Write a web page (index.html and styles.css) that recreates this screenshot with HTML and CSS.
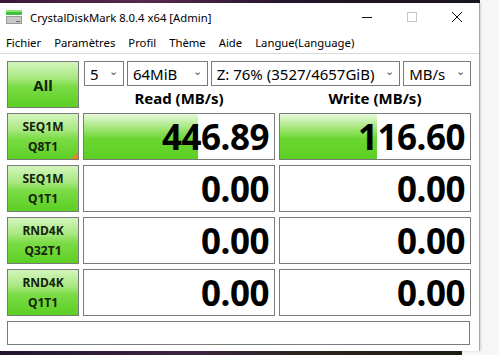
FILE: index.html
```html
<!DOCTYPE html>
<html lang="fr">
<head>
    <meta charset="UTF-8">
    <meta name="viewport" content="width=device-width, initial-scale=1.0">
    <title>CrystalDiskMark</title>
    <link rel="stylesheet" href="styles.css">
</head>
<body>

<div class="wall-top"></div>

<div class="window">
    <div class="titlebar">
        <svg class="app-icon" width="18" height="16" viewBox="0 0 18 16">
            <rect x="1" y="1" width="16" height="5" fill="#3fc23a"/>
            <rect x="1" y="1" width="16" height="2" fill="#8fe27a"/>
            <rect x="1" y="7" width="16" height="8" fill="#9a9a9a"/>
            <rect x="2" y="8" width="14" height="6" fill="#c9c9c9"/>
            <rect x="11" y="12" width="4" height="1" fill="#666"/>
        </svg>
        <span class="title">CrystalDiskMark 8.0.4 x64 [Admin]</span>
        <div class="controls">
            <svg width="12" height="12" viewBox="0 0 12 12"><path d="M1 6.5h10" stroke="#111" stroke-width="1"/></svg>
            <svg width="12" height="12" viewBox="0 0 12 12"><rect x="1.5" y="1.5" width="9" height="9" fill="none" stroke="#c4c4c4"/></svg>
            <svg width="12" height="12" viewBox="0 0 12 12"><path d="M1 1l10 10M11 1L1 11" stroke="#111" stroke-width="1"/></svg>
        </div>
    </div>

    <div class="menubar">
        <span>Fichier</span>
        <span>Paramètres</span>
        <span>Profil</span>
        <span>Thème</span>
        <span>Aide</span>
        <span>Langue(Language)</span>
    </div>

    <div class="main">
        <div class="grid">
            <div class="btn btn-all">All</div>
            <div class="top-right">
                <div class="combos">
                    <div class="combo c-count"><span>5</span><i>⌄</i></div>
                    <div class="combo c-size"><span>64MiB</span><i>⌄</i></div>
                    <div class="combo c-drive"><span>Z: 76% (3527/4657GiB)</span><i>⌄</i></div>
                    <div class="combo c-unit"><span>MB/s</span><i>⌄</i></div>
                </div>
                <div class="heads">
                    <div>Read (MB/s)</div>
                    <div>Write (MB/s)</div>
                </div>
            </div>

            <div class="btn active">SEQ1M<br>Q8T1</div>
            <div class="val"><div class="bar" style="width: 60%"></div><span>446.89</span></div>
            <div class="val"><div class="bar" style="width: 51%"></div><span>116.60</span></div>

            <div class="btn">SEQ1M<br>Q1T1</div>
            <div class="val"><span>0.00</span></div>
            <div class="val"><span>0.00</span></div>

            <div class="btn">RND4K<br>Q32T1</div>
            <div class="val"><span>0.00</span></div>
            <div class="val"><span>0.00</span></div>

            <div class="btn">RND4K<br>Q1T1</div>
            <div class="val"><span>0.00</span></div>
            <div class="val"><span>0.00</span></div>
        </div>

        <div class="status"></div>
    </div>
</div>

<div class="wall-bottom"></div>

</body>
</html>
```

FILE: styles.css
```css
:root{
    --border: #7a7a7a;
    --text: #000;
    --green-top: #d4f5bd;
    --green-mid: #7bdc45;
    --green-bot: #5ccf24;
}

*{
    box-sizing: border-box;
}

body{
    margin: 0;
    width: 499px;
    height: 355px;
    overflow: hidden;
    background: #f6f6f6;
    font-family: "Noto Sans", "Open Sans", sans-serif;
    color: var(--text);
}

.wall-top{
    width: 480px;
    height: 3px;
    background: linear-gradient(90deg, #3a1838, #5b2a4e 30%, #24152a 60%, #1a1420);
}

.wall-bottom{
    width: 462px;
    height: 4px;
    background: linear-gradient(90deg, #24142a, #3b2442 40%, #2a2418 70%, #1c1a14);
}

.window{
    width: 480px;
    height: 348px;
    background: #fff;
    border-right: 1px solid #a8a8a8;
    box-shadow: 1px 0 2px rgba(0,0,0,0.15);
}

.titlebar{
    height: 28px;
    display: flex;
    align-items: center;
    padding-left: 5px;
}

.app-icon{
    margin-right: 7px;
}

.title{
    font-size: 11.3px;
    flex: 1;
}

.controls{
    display: flex;
    gap: 33px;
    padding-right: 16px;
}

.menubar{
    height: 23px;
    display: flex;
    align-items: center;
    gap: 13px;
    padding-left: 6px;
    font-size: 11.3px;
    border-bottom: 1px solid #d9d9d9;
}

.main{
    padding: 7px 0 0 7px;
}

.grid{
    display: grid;
    grid-template-columns: 72px 192px 192px;
    grid-auto-rows: 47px;
    column-gap: 4px;
    row-gap: 5px;
    width: 464px;
}

.btn{
    border: 1px solid var(--border);
    background: linear-gradient(180deg, var(--green-top) 0%, #a9e883 35%, var(--green-mid) 55%, var(--green-bot) 100%);
    font-weight: bold;
    font-size: 12px;
    line-height: 20px;
    color: #15240a;
    display: flex;
    align-items: center;
    justify-content: center;
    text-align: center;
    position: relative;
}

.btn-all{
    font-size: 15px;
}

.btn.active::after{
    content: "";
    position: absolute;
    right: 0;
    bottom: 0;
    border-left: 7px solid transparent;
    border-bottom: 7px solid #f0802a;
}

.top-right{
    grid-column: 2 / 4;
    display: flex;
    flex-direction: column;
}

.combos{
    display: flex;
    gap: 3px;
    height: 25px;
    padding-left: 1px;
}

.combo{
    border: 1px solid var(--border);
    background: #fff;
    display: flex;
    align-items: center;
    font-size: 15px;
    padding-left: 5px;
    overflow: hidden;
    white-space: nowrap;
}

.combo span{
    flex: 1;
    overflow: hidden;
}

.combo i{
    font-style: normal;
    font-size: 11px;
    color: #555;
    width: 14px;
    margin-top: -6px;
}

.c-count{ width: 40px; }
.c-size{ width: 81px; }
.c-drive{ width: 190px; }
.c-unit{ width: 68px; }

.heads{
    flex: 1;
    display: grid;
    grid-template-columns: 192px 192px;
    column-gap: 4px;
    align-items: center;
    text-align: center;
    font-weight: bold;
    font-size: 15px;
    padding-top: 1px;
}

.val{
    border: 1px solid var(--border);
    background: #fff;
    position: relative;
    display: flex;
    align-items: center;
    justify-content: flex-end;
    padding-right: 5px;
}

.val .bar{
    position: absolute;
    left: 0;
    top: 0;
    bottom: 0;
    background: linear-gradient(180deg, #e8f9dc 0%, #a6e77e 30%, #6bd630 55%, #5ccf24 100%);
}

.val span{
    position: relative;
    font-weight: bold;
    font-size: 35px;
    letter-spacing: -0.5px;
}

.status{
    margin-top: 5px;
    width: 463px;
    height: 24px;
    border: 1px solid var(--border);
}
```
